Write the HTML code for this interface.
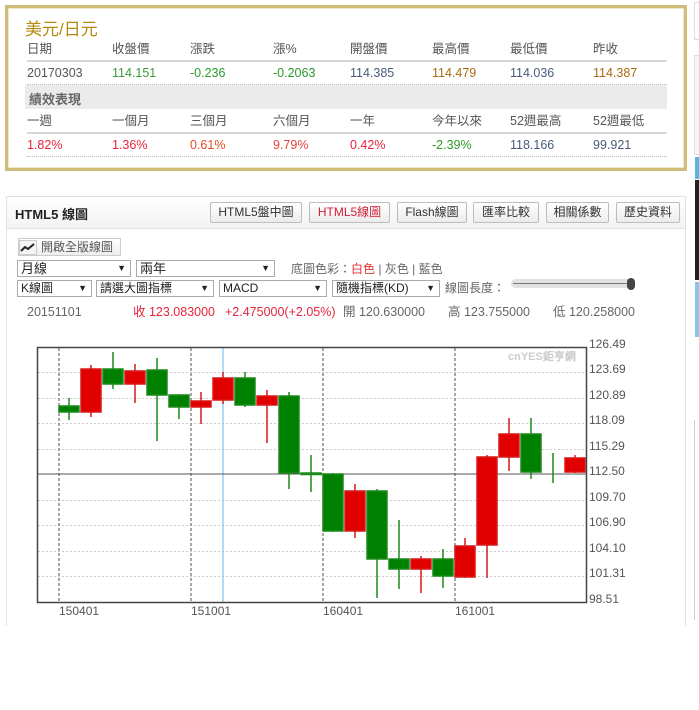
<!DOCTYPE html>
<html><head><meta charset="utf-8"><style>
*{margin:0;padding:0;box-sizing:border-box}
body{width:699px;height:710px;background:#fff;position:relative;overflow:hidden;font-family:"Liberation Sans","Noto Sans CJK TC",sans-serif;font-size:12px;color:#555}
.a{position:absolute;white-space:nowrap}
.row .a{top:0;line-height:14px}
.box{position:absolute;left:5px;top:5px;width:682px;height:166px;border:3px solid #d2bd78;box-shadow:inset 0 0 0 1px #efe6c8}
.hl{position:absolute;left:27px;width:640px;height:2px;background:#d8d8d8}
.dl{position:absolute;left:27px;width:640px;border-top:1px dotted #bbb}
.btn{position:absolute;top:202px;height:21px;border:1px solid #bdbdbd;border-radius:2px;background:linear-gradient(#fff,#ececec);font-size:12px;text-align:center;line-height:19px;color:#333}
.sel{position:absolute;height:17px;border:1px solid #aaa;background:#fff;font-size:13px;line-height:15px;padding-left:3px;color:#222}
.sel:after{content:"▼";position:absolute;right:4px;top:0;font-size:9px}
.g{color:#2a9a2a}.r{color:#e8233a}.b{color:#4a5a7a}
</style></head><body>
<div class="box"></div>
<div class="a" style="left:25px;top:15px;font-size:17px;color:#b68a10">美元/日元</div>
<div class="a row" style="top:42px;left:0;width:699px;font-size:12.5px;color:#555">
<span class="a" style="left:27px">日期</span><span class="a" style="left:112px">收盤價</span><span class="a" style="left:190px">漲跌</span><span class="a" style="left:273px">漲%</span><span class="a" style="left:350px">開盤價</span><span class="a" style="left:432px">最高價</span><span class="a" style="left:510px">最低價</span><span class="a" style="left:593px">昨收</span></div>
<div class="hl" style="top:60px"></div>
<div class="a row" style="top:66px;left:0;width:699px;font-size:12.5px">
<span class="a" style="left:27px;color:#555">20170303</span><span class="a" style="left:112px;color:#3a9a3a">114.151</span><span class="a g" style="left:190px">-0.236</span><span class="a g" style="left:273px">-0.2063</span><span class="a b" style="left:350px">114.385</span><span class="a" style="left:432px;color:#a86a10">114.479</span><span class="a b" style="left:510px">114.036</span><span class="a" style="left:593px;color:#a86a10">114.387</span></div>
<div class="dl" style="top:84px"></div>
<div class="a" style="left:25px;top:85px;width:642px;height:24px;background:#ebebeb"></div>
<div class="a" style="left:29px;top:89px;font-size:13px;font-weight:bold;color:#666">績效表現</div>
<div class="a row" style="top:114px;left:0;width:699px;font-size:12.5px;color:#555">
<span class="a" style="left:27px">一週</span><span class="a" style="left:112px">一個月</span><span class="a" style="left:190px">三個月</span><span class="a" style="left:273px">六個月</span><span class="a" style="left:350px">一年</span><span class="a" style="left:432px">今年以來</span><span class="a" style="left:510px">52週最高</span><span class="a" style="left:593px">52週最低</span></div>
<div class="hl" style="top:132px"></div>
<div class="a row" style="top:138px;left:0;width:699px;font-size:12.5px">
<span class="a r" style="left:27px">1.82%</span><span class="a r" style="left:112px">1.36%</span><span class="a" style="left:190px;color:#e84a20">0.61%</span><span class="a" style="left:273px;color:#e8403a">9.79%</span><span class="a r" style="left:350px">0.42%</span><span class="a g" style="left:432px">-2.39%</span><span class="a b" style="left:510px">118.166</span><span class="a b" style="left:593px">99.921</span></div>
<div class="dl" style="top:156px"></div>

<!-- right strip -->
<div class="a" style="left:694px;top:2px;width:5px;height:38px;border:1px solid #ddd;border-right:none"></div>
<div class="a" style="left:694px;top:55px;width:5px;height:100px;border:1px solid #dde;background:#f4f6fa;border-right:none"></div>
<div class="a" style="left:695px;top:157px;width:4px;height:22px;background:#5ab4e0"></div>
<div class="a" style="left:695px;top:180px;width:4px;height:100px;background:#222"></div>
<div class="a" style="left:695px;top:282px;width:4px;height:55px;background:#8ac4e8"></div>
<div class="a" style="left:694px;top:420px;width:5px;height:200px;border-left:1px solid #ccc"></div>

<!-- panel -->
<div class="a" style="left:6px;top:196px;width:680px;height:430px;border:1px solid #e2e2e2;border-bottom:none"></div>
<div class="a" style="left:7px;top:197px;width:678px;height:32px;background:linear-gradient(#fff,#f3f3f3);border-bottom:1px solid #e2e2e2"></div>
<div class="a" style="left:15px;top:204px;font-size:13px;font-weight:bold;color:#222">HTML5 線圖</div>
<div class="btn" style="left:210px;width:92px">HTML5盤中圖</div>
<div class="btn" style="left:309px;width:81px;color:#d0203a">HTML5線圖</div>
<div class="btn" style="left:397px;width:70px">Flash線圖</div>
<div class="btn" style="left:473px;width:66px">匯率比較</div>
<div class="btn" style="left:546px;width:63px">相關係數</div>
<div class="btn" style="left:616px;width:64px">歷史資料</div>

<div class="a" style="left:18px;top:238px;width:103px;height:18px;border:1px solid #ccc;background:linear-gradient(#fff,#eee);font-size:12px;line-height:16px;padding-left:22px;color:#555">開啟全版線圖</div>
<svg class="a" style="left:19px;top:240px" width="18" height="15"><rect x="0.5" y="0.5" width="17" height="14" fill="#f4f4f4" stroke="#ccc"/><polyline points="2,11 6,7 9,9 15,4" fill="none" stroke="#222" stroke-width="2"/></svg>

<div class="sel" style="left:17px;top:260px;width:114px">月線</div>
<div class="sel" style="left:136px;top:260px;width:139px">兩年</div>
<div class="a" style="left:291px;top:262px;font-size:12px;line-height:14px;color:#666">底圖色彩：<span style="color:#e83030">白色</span> | 灰色 | 藍色</div>
<div class="sel" style="left:17px;top:280px;width:75px;font-size:12px">K線圖</div>
<div class="sel" style="left:96px;top:280px;width:118px;font-size:12px">請選大圖指標</div>
<div class="sel" style="left:219px;top:280px;width:108px;font-size:12px">MACD</div>
<div class="sel" style="left:332px;top:280px;width:108px;font-size:12px">隨機指標(KD)</div>
<div class="a" style="left:445px;top:281px;font-size:12px;line-height:14px;color:#666">線圖長度：</div>
<div class="a" style="left:511px;top:279px;width:122px;height:9px;border-radius:5px;background:#e2e2e2"></div>
<div class="a" style="left:513px;top:283px;width:118px;height:1px;background:#777"></div>
<div class="a" style="left:627px;top:278px;width:8px;height:12px;border-radius:4px;background:#444"></div>

<div class="a row" style="top:305px;left:0;width:699px;font-size:12.5px;color:#666">
<span class="a" style="left:27px">20151101</span><span class="a r" style="left:133px">收 123.083000</span><span class="a r" style="left:225px">+2.475000(+2.05%)</span><span class="a" style="left:343px">開 120.630000</span><span class="a" style="left:448px">高 123.755000</span><span class="a" style="left:553px">低 120.258000</span></div>

<svg class="a" style="left:0;top:330px" width="699" height="290" font-family="Liberation Sans, sans-serif">
<g transform="translate(0,-330)">
<g stroke="#ccc" stroke-dasharray="2,2" stroke-width="1">
<line x1="38" x2="586" y1="372.5" y2="372.5"/><line x1="38" x2="586" y1="398.5" y2="398.5"/><line x1="38" x2="586" y1="423.5" y2="423.5"/><line x1="38" x2="586" y1="449.5" y2="449.5"/><line x1="38" x2="586" y1="500.5" y2="500.5"/><line x1="38" x2="586" y1="525.5" y2="525.5"/><line x1="38" x2="586" y1="551.5" y2="551.5"/><line x1="38" x2="586" y1="576.5" y2="576.5"/>
</g>
<g stroke="#888" stroke-dasharray="3,2" stroke-width="1.5">
<line x1="59" x2="59" y1="348" y2="603"/><line x1="191" x2="191" y1="348" y2="603"/><line x1="323" x2="323" y1="348" y2="603"/><line x1="455" x2="455" y1="348" y2="603"/>
</g>
<line x1="223" x2="223" y1="348" y2="603" stroke="#7cc4f0" stroke-width="1.2"/>
<line x1="38" x2="586" y1="474" y2="474" stroke="#555" stroke-width="1"/>
<text x="508" y="360" font-size="11" font-weight="bold" fill="#ccc">cnYES鉅亨網</text>
<g stroke-width="1.5">
<g stroke="#1a8a1a" fill="#008000">
<line x1="69" x2="69" y1="398" y2="420"/><rect x="59" y="406" width="20" height="6"/>
<line x1="113" x2="113" y1="352" y2="389"/><rect x="103" y="369" width="20" height="15"/>
<line x1="157" x2="157" y1="358" y2="441"/><rect x="147" y="370" width="20" height="25"/>
<line x1="179" x2="179" y1="394" y2="419"/><rect x="169" y="395" width="20" height="12"/>
<line x1="245" x2="245" y1="372" y2="407"/><rect x="235" y="378" width="20" height="27"/>
<line x1="289" x2="289" y1="392" y2="489"/><rect x="279" y="396" width="20" height="77"/>
<line x1="311" x2="311" y1="455" y2="492"/><rect x="301" y="473" width="20" height="1.5"/>
<line x1="333" x2="333" y1="473" y2="532"/><rect x="323" y="474" width="20" height="57"/>
<line x1="377" x2="377" y1="489" y2="598"/><rect x="367" y="491" width="20" height="68"/>
<line x1="399" x2="399" y1="520" y2="589"/><rect x="389" y="559" width="20" height="10"/>
<line x1="443" x2="443" y1="549" y2="588"/><rect x="433" y="559" width="20" height="17"/>
<line x1="531" x2="531" y1="418" y2="479"/><rect x="521" y="434" width="20" height="38"/>
<line x1="553" x2="553" y1="453" y2="483"/>
</g>
<g stroke="#d81818" fill="#e00000">
<line x1="91" x2="91" y1="365" y2="417"/><rect x="81" y="369" width="20" height="43"/>
<line x1="135" x2="135" y1="364" y2="403"/><rect x="125" y="371" width="20" height="13"/>
<line x1="201" x2="201" y1="392" y2="424"/><rect x="191" y="401" width="20" height="6"/>
<line x1="223" x2="223" y1="372" y2="404"/><rect x="213" y="378" width="20" height="22"/>
<line x1="267" x2="267" y1="390" y2="443"/><rect x="257" y="396" width="20" height="9"/>
<line x1="355" x2="355" y1="484" y2="538"/><rect x="345" y="491" width="20" height="40"/>
<line x1="421" x2="421" y1="556" y2="593"/><rect x="411" y="559" width="20" height="10"/>
<line x1="465" x2="465" y1="538" y2="578"/><rect x="455" y="546" width="20" height="31"/>
<line x1="487" x2="487" y1="455" y2="578"/><rect x="477" y="457" width="20" height="88"/>
<line x1="509" x2="509" y1="418" y2="471"/><rect x="499" y="434" width="20" height="23"/>
<line x1="575" x2="575" y1="455" y2="473"/><rect x="565" y="458" width="20" height="14"/>
</g>
</g>
<rect x="37.5" y="347.5" width="549" height="255" fill="none" stroke="#444" stroke-width="1.5"/>
<g font-size="12" fill="#555">
<text x="589" y="348">126.49</text><text x="589" y="373">123.69</text><text x="589" y="399">120.89</text><text x="589" y="424">118.09</text><text x="589" y="450">115.29</text><text x="589" y="475">112.50</text><text x="589" y="501">109.70</text><text x="589" y="526">106.90</text><text x="589" y="552">104.10</text><text x="589" y="577">101.31</text><text x="589" y="603">98.51</text>
<text x="59" y="615">150401</text><text x="191" y="615">151001</text><text x="323" y="615">160401</text><text x="455" y="615">161001</text>
</g>
</g>
</svg>
</body></html>
